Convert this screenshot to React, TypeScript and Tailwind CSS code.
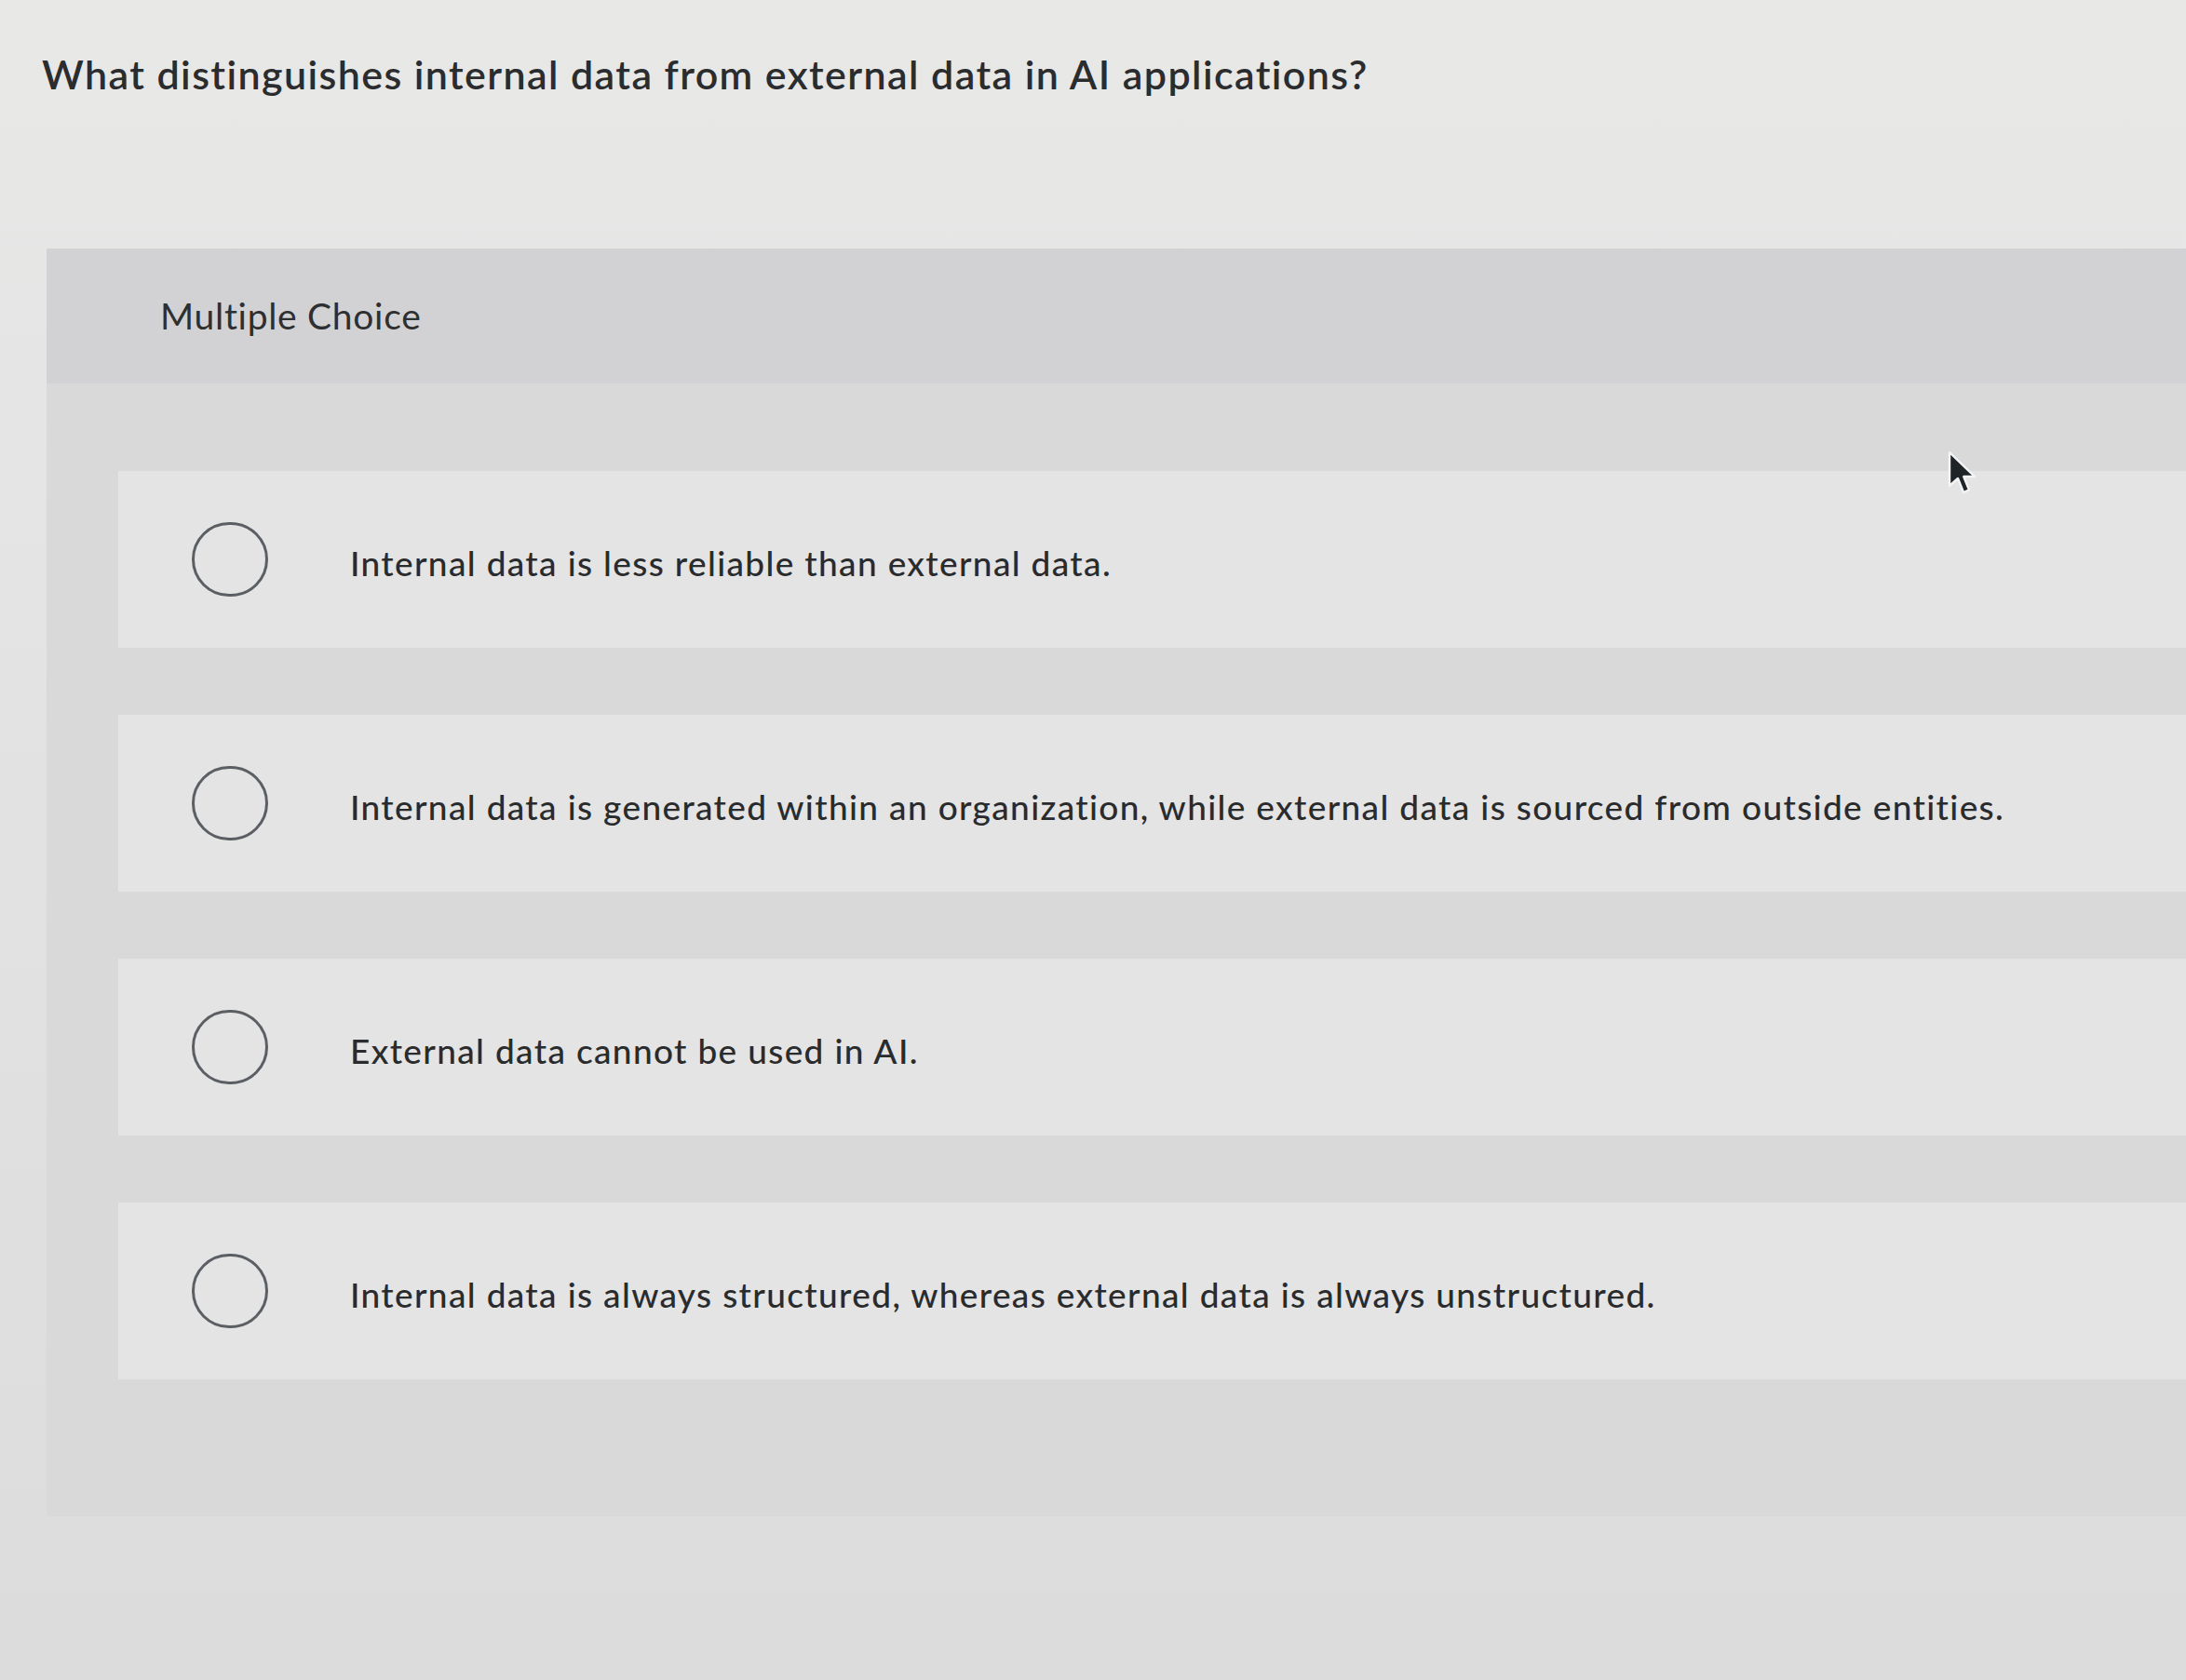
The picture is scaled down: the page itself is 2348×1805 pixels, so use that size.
import React from 'react';

const options = [
  'Internal data is less reliable than external data.',
  'Internal data is generated within an organization, while external data is sourced from outside entities.',
  'External data cannot be used in AI.',
  'Internal data is always structured, whereas external data is always unstructured.',
];

const Cursor = () => (
  <svg className="absolute left-[2092px] top-[484px]" width="34" height="50" viewBox="0 0 17 25">
    <path d="M1 1 L1 19 L5.5 15 L8.5 22.5 L11.5 21.2 L8.6 14 L14.5 14 Z" fill="#1f2428" stroke="#f4f4f4" strokeWidth="1.2" strokeLinejoin="round" />
  </svg>
);

export default function App() {
  return (
    <div
      className="relative w-[2348px] h-[1805px] overflow-hidden bg-gradient-to-b from-[#e8e8e7] via-[#e2e2e3] to-[#dcdcdd] text-[#2b2c2e]"
      style={{ fontFamily: 'Lato, "Open Sans", sans-serif' }}
    >
      <div className="pl-[45px] pt-[52px]">
        <h1 className="text-[43px] leading-[56px] font-semibold tracking-[1.4px]">
          What distinguishes internal data from external data in AI applications?
        </h1>
      </div>

      <div className="ml-[50px] mt-[159px] bg-[#d9d9da]">
        <div className="h-[145px] flex items-center pl-[122px] bg-[#d2d2d4]">
          <span className="text-[39px] tracking-[0.7px] text-[#2e2f31]">Multiple Choice</span>
        </div>
        <div className="pt-[94px] pb-[147px] pl-[77px] flex flex-col gap-[72px]">
          {options.map((text) => (
            <div key={text} className="h-[190px] flex items-center bg-[#e4e4e4]">
              <div className="ml-[79px] w-[82px] h-[80px] shrink-0 rounded-full border-[3px] border-[#5b5f63]" />
              <span className="ml-[88px] pt-[8px] text-[37px] tracking-[1.35px] font-medium whitespace-nowrap text-[#2a2b2d]">
                {text}
              </span>
            </div>
          ))}
        </div>
      </div>

      <Cursor />
    </div>
  );
}
